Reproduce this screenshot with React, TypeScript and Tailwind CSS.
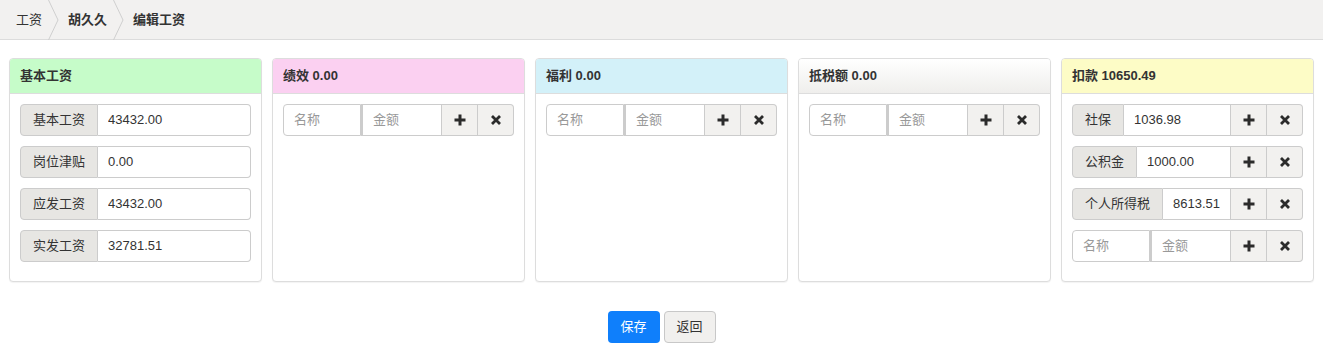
import React from "react";

const FONT = "font-['Liberation_Sans','Noto_Sans_CJK_SC',sans-serif]";

interface Item {
  label: string;
  value: string;
}

interface Panel {
  title: string;
  head: string;
  items: Item[];
  editable: boolean;
}

const panels: Panel[] = [
  {
    title: "基本工资",
    head: "bg-[#c6fcc9]",
    editable: false,
    items: [
      { label: "基本工资", value: "43432.00" },
      { label: "岗位津贴", value: "0.00" },
      { label: "应发工资", value: "43432.00" },
      { label: "实发工资", value: "32781.51" },
    ],
  },
  { title: "绩效 0.00", head: "bg-[#fbd0f1]", editable: true, items: [] },
  { title: "福利 0.00", head: "bg-[#d3f1f9]", editable: true, items: [] },
  {
    title: "抵税额 0.00",
    head: "bg-gradient-to-b from-[#ffffff] to-[#efeeec]",
    editable: true,
    items: [],
  },
  {
    title: "扣款 10650.49",
    head: "bg-[#fdfcc6]",
    editable: true,
    items: [
      { label: "社保", value: "1036.98" },
      { label: "公积金", value: "1000.00" },
      { label: "个人所得税", value: "8613.51" },
    ],
  },
];

function Chevron() {
  return (
    <svg className="ml-[6px] mr-[9px] h-10 w-[11px] shrink-0" viewBox="0 0 11 40">
      <polyline points="0.5,0 10,20 0.5,40" fill="none" stroke="#cfcfcf" strokeWidth="1" />
    </svg>
  );
}

function PlusIcon() {
  return (
    <svg width="12" height="12" viewBox="0 0 12 12">
      <path d="M6 0.5v11M0.5 6h11" stroke="#2b2b2b" strokeWidth="3" />
    </svg>
  );
}

function CrossIcon() {
  return (
    <svg width="10" height="10" viewBox="0 0 10 10">
      <path d="M1 1l8 8M9 1l-8 8" stroke="#2b2b2b" strokeWidth="2.8" />
    </svg>
  );
}

function Buttons() {
  return (
    <>
      <button className="flex w-9 shrink-0 items-center justify-center border border-l-0 border-[#ccc] bg-[#f2f1ef]">
        <PlusIcon />
      </button>
      <button className="flex w-9 shrink-0 items-center justify-center rounded-r border border-l-0 border-[#ccc] bg-[#f2f1ef]">
        <CrossIcon />
      </button>
    </>
  );
}

function Row({ item, editable }: { item: Item; editable: boolean }) {
  return (
    <div className="mb-[10px] flex h-8">
      <span className="flex shrink-0 items-center rounded-l border border-[#ccc] bg-[#e7e6e3] px-3 text-[#333]">
        {item.label}
      </span>
      <input
        readOnly
        defaultValue={item.value}
        className={`min-w-0 flex-1 border border-l-0 border-[#ccc] bg-white pl-[10px] text-[#333] outline-none ${
          editable ? "" : "rounded-r"
        }`}
      />
      {editable && <Buttons />}
    </div>
  );
}

function NewRow() {
  return (
    <div className="mb-[10px] flex h-8">
      <input
        placeholder="名称"
        className="w-[78px] min-w-0 rounded-l border border-[#ccc] bg-white pl-[10px] text-[#333] outline-none placeholder:text-[#999]"
      />
      <input
        placeholder="金额"
        className="min-w-0 flex-1 border border-l-2 border-[#ccc] bg-white pl-[10px] text-[#333] outline-none placeholder:text-[#999]"
      />
      <Buttons />
    </div>
  );
}

export default function App() {
  return (
    <div className={`${FONT} min-h-[354px] bg-white text-[13px] text-[#333]`}>
      {/* 面包屑 */}
      <nav className="flex h-10 items-center border-b border-[#dcdcdc] bg-[#f2f1f0] pl-4">
        <span>工资</span>
        <Chevron />
        <span className="font-bold">胡久久</span>
        <Chevron />
        <span className="font-bold">编辑工资</span>
      </nav>

      {/* 面板 */}
      <div className="flex gap-[10px] px-[9px] pt-[18px]">
        {panels.map((p) => (
          <div
            key={p.title}
            className="flex-1 overflow-hidden rounded border border-[#dddddd] bg-white shadow-[0_1px_1px_rgba(0,0,0,0.05)]"
          >
            <div className={`flex h-[35px] items-center border-b border-[#dddddd] px-[10px] font-bold ${p.head}`}>
              {p.title}
            </div>
            <div className="px-[10px] pb-[9px] pt-[10px]">
              {p.items.map((it) => (
                <Row key={it.label} item={it} editable={p.editable} />
              ))}
              {p.editable && <NewRow />}
            </div>
          </div>
        ))}
      </div>

      {/* 操作 */}
      <div className="mt-[29px] flex justify-center gap-1">
        <button className="h-8 w-[52px] rounded bg-[#0f7ffb] text-white">保存</button>
        <button className="h-8 w-[52px] rounded border border-[#c8c8c8] bg-[#f1f0ee] text-[#333]">返回</button>
      </div>
    </div>
  );
}
